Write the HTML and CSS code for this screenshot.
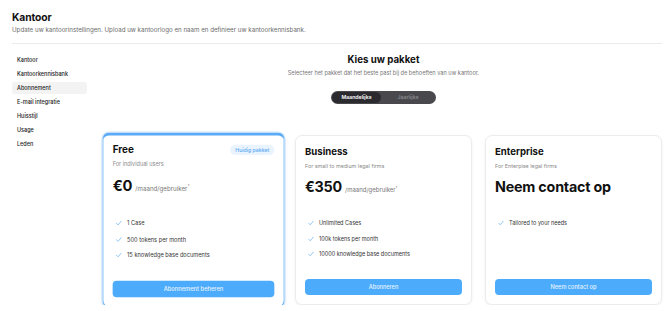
FILE: index.html
```html
<!DOCTYPE html>
<html lang="nl">
<head>
<meta charset="utf-8">
<title>Kantoor</title>
<link rel="stylesheet" href="styles.css">
</head>
<body>
<header class="page-header">
  <h1 class="page-title">Kantoor</h1>
  <p class="page-subtitle">Update uw kantoorinstellingen. Upload uw kantoorlogo en naam en definieer uw kantoorkennisbank.</p>
</header>
<div class="layout">
  <nav class="sidebar">
    <a class="nav-item">Kantoor</a>
    <a class="nav-item">Kantoorkennisbank</a>
    <a class="nav-item active">Abonnement</a>
    <a class="nav-item">E-mail integratie</a>
    <a class="nav-item">Huisstijl</a>
    <a class="nav-item">Usage</a>
    <a class="nav-item">Leden</a>
  </nav>
  <main class="main">
    <h2 class="main-title">Kies uw pakket</h2>
    <p class="main-subtitle">Selecteer het pakket dat het beste past bij de behoeften van uw kantoor.</p>
    <div class="toggle">
      <span class="toggle-opt on">Maandelijks</span>
      <span class="toggle-opt">Jaarlijks</span>
    </div>
    <div class="plans">
      <section class="plan current">
        <div class="plan-head">
          <h3 class="plan-name">Free</h3>
          <span class="badge">Huidig pakket</span>
        </div>
        <p class="plan-desc">For individual users</p>
        <div class="price"><span class="amount">€0</span><span class="per">/maand/gebruiker<sup>*</sup></span></div>
        <ul class="features">
          <li><svg class="check" viewBox="0 0 12 12"><path d="M1.5 6.5 L4.5 9.5 L10.5 2.5"/></svg>1 Case</li>
          <li><svg class="check" viewBox="0 0 12 12"><path d="M1.5 6.5 L4.5 9.5 L10.5 2.5"/></svg>500 tokens per month</li>
          <li><svg class="check" viewBox="0 0 12 12"><path d="M1.5 6.5 L4.5 9.5 L10.5 2.5"/></svg>15 knowledge base documents</li>
        </ul>
        <button class="btn">Abonnement beheren</button>
      </section>
      <section class="plan">
        <div class="plan-head">
          <h3 class="plan-name">Business</h3>
        </div>
        <p class="plan-desc">For small to medium legal firms</p>
        <div class="price"><span class="amount">€350</span><span class="per">/maand/gebruiker<sup>*</sup></span></div>
        <ul class="features">
          <li><svg class="check" viewBox="0 0 12 12"><path d="M1.5 6.5 L4.5 9.5 L10.5 2.5"/></svg>Unlimited Cases</li>
          <li><svg class="check" viewBox="0 0 12 12"><path d="M1.5 6.5 L4.5 9.5 L10.5 2.5"/></svg>100k tokens per month</li>
          <li><svg class="check" viewBox="0 0 12 12"><path d="M1.5 6.5 L4.5 9.5 L10.5 2.5"/></svg>10000 knowledge base documents</li>
        </ul>
        <button class="btn">Abonneren</button>
      </section>
      <section class="plan">
        <div class="plan-head">
          <h3 class="plan-name">Enterprise</h3>
        </div>
        <p class="plan-desc">For Enterpise legal firms</p>
        <div class="price"><span class="amount">Neem contact op</span></div>
        <ul class="features">
          <li><svg class="check" viewBox="0 0 12 12"><path d="M1.5 6.5 L4.5 9.5 L10.5 2.5"/></svg>Tailored to your needs</li>
        </ul>
        <button class="btn">Neem contact op</button>
      </section>
    </div>
  </main>
</div>
</body>
</html>
```

FILE: styles.css
```css
* { box-sizing: border-box; }
html, body { margin: 0; background: #ffffff; }
body {
  font-family: Inter, "Liberation Sans", Arial, sans-serif;
  color: #111;
  padding: 11px 8px 0 12px;
}
.page-header {
  border-bottom: 1px solid #ebebeb;
  padding-bottom: 9px;
}
.page-title {
  margin: 0;
  font-size: 10.3px;
  line-height: 13px;
  font-weight: 700;
  letter-spacing: -0.1px;
}
.page-subtitle {
  margin: 1px 0 0;
  font-size: 6.2px;
  line-height: 9px;
  color: #6b6b6b;
}
.layout {
  display: flex;
  gap: 18px;
  padding-top: 10px;
}
.sidebar {
  width: 75px;
  flex: none;
  display: flex;
  flex-direction: column;
  gap: 2px;
}
.nav-item {
  display: block;
  height: 12px;
  line-height: 12px;
  padding-left: 5px;
  font-size: 5.5px;
  font-weight: 500;
  color: #222;
  border-radius: 3px;
}
.nav-item.active { background: #f3f3f3; }
.main {
  flex: 1;
  display: flex;
  flex-direction: column;
  align-items: center;
}
.main-title {
  margin: 0;
  font-size: 9.7px;
  line-height: 12px;
  font-weight: 700;
}
.main-subtitle {
  margin: 3px 0 0;
  font-size: 5.6px;
  line-height: 9px;
  color: #777;
}
.toggle {
  margin-top: 13px;
  width: 105px;
  height: 13px;
  padding: 1px;
  border-radius: 7px;
  background: #48484d;
  display: flex;
}
.toggle-opt {
  flex: 1;
  text-align: center;
  font-size: 5.2px;
  line-height: 11px;
  font-weight: 600;
  color: #8a8a8e;
  border-radius: 6px;
}
.toggle-opt.on {
  flex: none;
  width: 49px;
  background: #2b2b2f;
  color: #fff;
}
.plans {
  margin-top: 31px;
  width: 100%;
  display: grid;
  grid-template-columns: repeat(3, 1fr);
  gap: 13px;
}
.plan {
  height: 170px;
  border: 1px solid #ececec;
  border-radius: 7px;
  box-shadow: 0 1px 3px rgba(0,0,0,0.06);
  padding: 10px 9px 9px;
  display: flex;
  flex-direction: column;
  background: #fff;
}
.plan.current {
  border: 1px solid #68b2f6;
  border-top: 3px solid #5aaaf5;
  padding-top: 8px;
  transform: scale(1.03);
  box-shadow: 0 0 0 1px #cfe6fc, 0 2px 5px rgba(0,0,0,0.06);
}
.plan-head {
  display: flex;
  align-items: center;
  justify-content: space-between;
  height: 12px;
}
.plan-name {
  margin: 0;
  font-size: 9.6px;
  line-height: 12px;
  font-weight: 700;
}
.badge {
  font-size: 5px;
  line-height: 10px;
  padding: 0 5px;
  border-radius: 5px;
  background: #eaf4fe;
  color: #5aa8ee;
  font-weight: 500;
}
.plan-desc {
  margin: 4px 0 0;
  font-size: 5.4px;
  line-height: 8px;
  color: #8a8a8a;
}
.price {
  margin-top: 8px;
  height: 18px;
  display: flex;
  align-items: baseline;
  gap: 3px;
}
.amount {
  font-size: 14.3px;
  line-height: 18px;
  font-weight: 700;
  letter-spacing: -0.2px;
}
.per {
  font-size: 6px;
  color: #777;
}
.per sup { font-size: 4px; }
.features {
  list-style: none;
  margin: 19px 0 0;
  padding: 0 0 0 3px;
}
.features li {
  height: 15.7px;
  display: flex;
  align-items: center;
  gap: 5px;
  font-size: 5.5px;
  color: #333;
  font-weight: 400;
}
.check {
  width: 6px;
  height: 6px;
  fill: none;
  stroke: #5aaaf0;
  stroke-width: 1.3;
  stroke-linecap: round;
  stroke-linejoin: round;
}
.btn {
  margin-top: auto;
  height: 16px;
  border: none;
  border-radius: 4px;
  background: #4dabfb;
  color: #e8f4ff;
  font-family: inherit;
  font-size: 5.6px;
  font-weight: 500;
  padding: 0;
  width: 100%;
}
```
